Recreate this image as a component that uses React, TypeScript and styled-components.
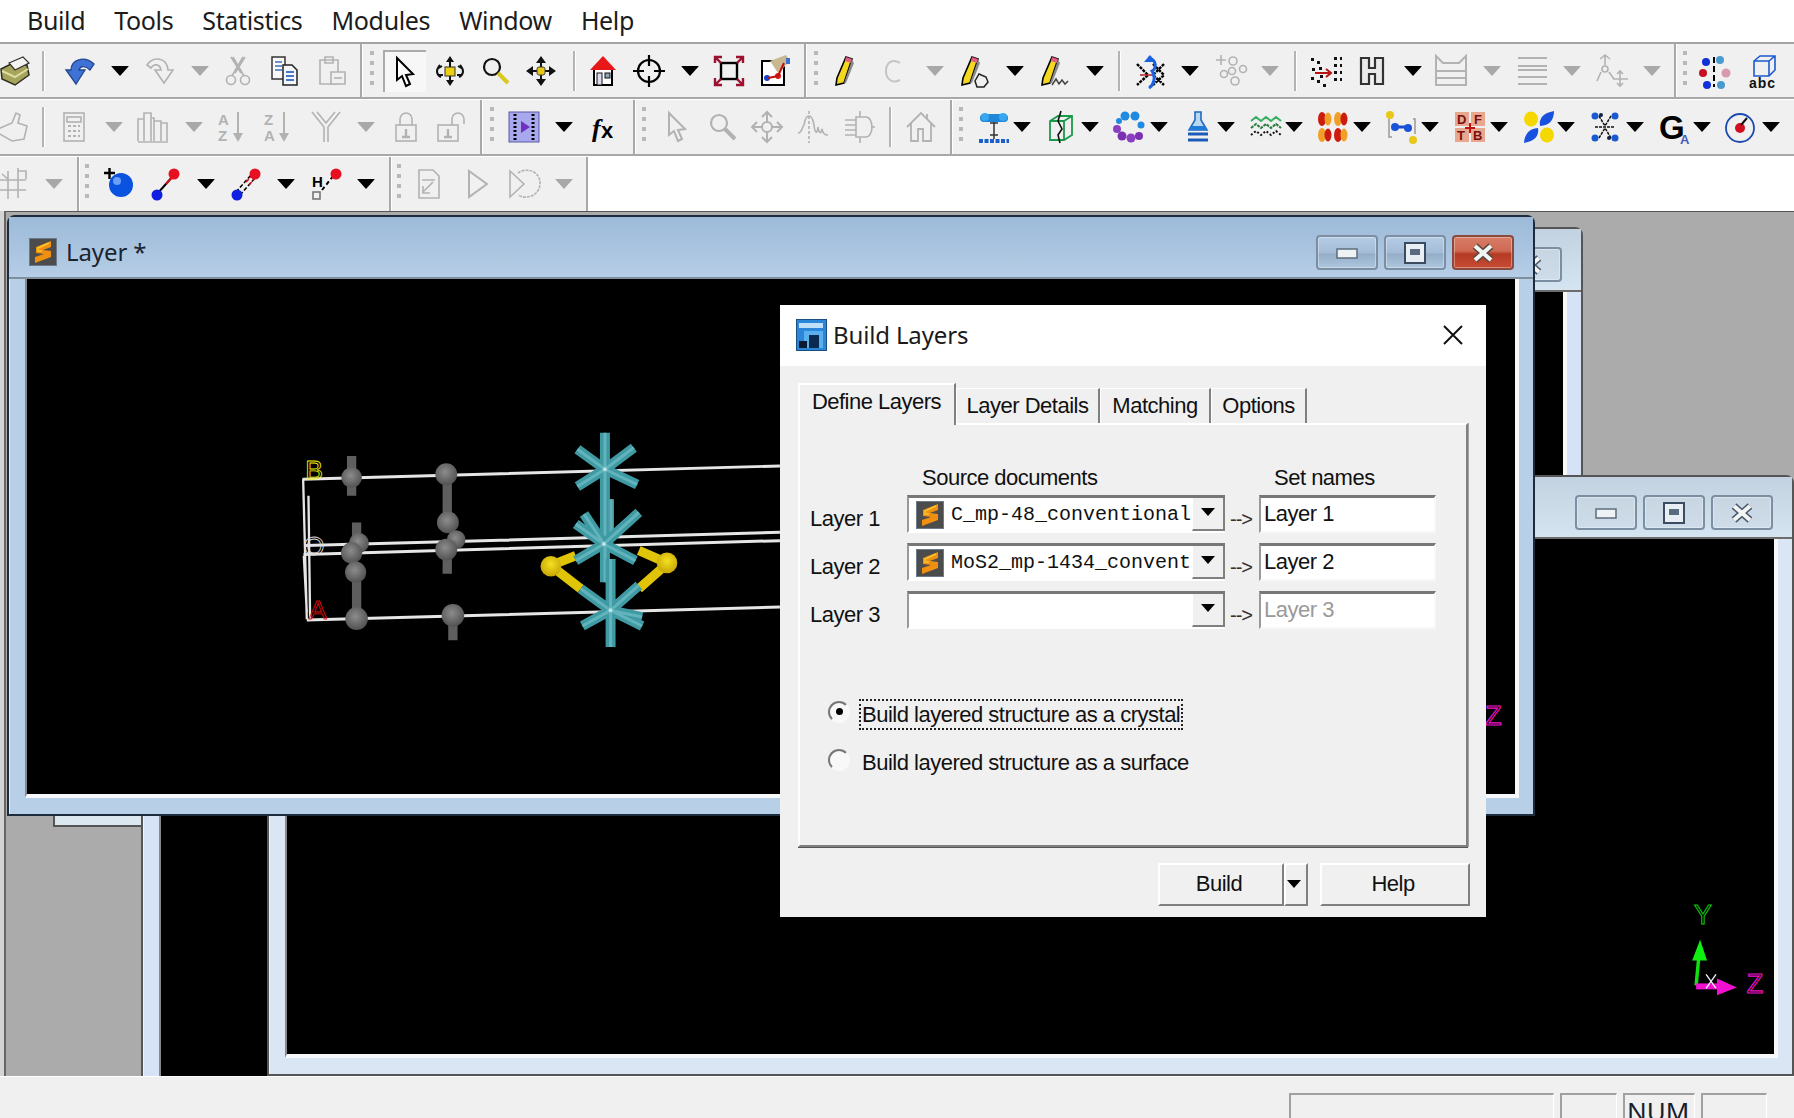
import React from 'react';
import styled, { createGlobalStyle } from 'styled-components';

const Global = createGlobalStyle`
  html, body { margin: 0; padding: 0; background: #fff; overflow: hidden; }
  * { box-sizing: border-box; }
`;

const UI = `"Liberation Sans", Arial, sans-serif`;
const NOTO = `"Noto Sans", "Open Sans", sans-serif`;
const g = '#b2b2b2';

const Page = styled.div`
  width: 1794px; height: 1118px; display: flex; flex-direction: column; overflow: hidden; background: #fff; position: relative;
`;
const MenuBar = styled.div`
  height: 42px; display: flex; align-items: center; gap: 29px; padding: 0 0 2px 27px;
  font: 25px ${NOTO}; color: #1c1c1c; background: #fff; letter-spacing: -0.35px;
`;
const Row = styled.div<{ $first?: boolean; $last?: boolean; $w?: number }>`
  display: flex; flex: none; background: #f0f0f0;
  height: ${p => (p.$first ? 57 : p.$last ? 54 : 56)}px;
  width: ${p => (p.$w ? `${p.$w}px` : '100%')};
  margin-top: ${p => (p.$first ? 0 : 1)}px;
  border-top: ${p => (p.$first ? '2px solid #a4a4a4' : 'none')};
  border-bottom: ${p => (p.$last ? 'none' : '2px solid #a8a8a8')};
`;
const Slot = styled.div<{ $w: number; $gap: number }>`
  width: ${p => p.$w}px; margin-left: ${p => p.$gap}px; flex: none; display: flex; align-items: center; justify-content: center; position: relative;
`;
const BandLine = styled.div`
  width: 2px; align-self: stretch; background: #a8a8a8; box-shadow: 1px 0 0 #fff;
`;
const SepLine = styled.div`
  width: 2px; height: 40px; background: #b4b4b4; box-shadow: 1px 0 0 #fff;
`;
const GripDots = styled.div`
  width: 4px; height: 40px; background: repeating-linear-gradient(to bottom, #b8b8b8 0 4px, transparent 4px 10px);
`;
const Caret = styled.div<{ $off?: boolean }>`
  width: 0; height: 0; border-left: 9px solid transparent; border-right: 9px solid transparent;
  border-top: 10px solid ${p => (p.$off ? '#a8a8a8' : '#000')};
  border-radius: 1px;
`;
const Pressed = styled.div`
  width: 43px; height: 42px; flex: none; display: flex; align-items: center; justify-content: center;
  background: #f7f7f7; border-top: 2px solid #ababab; border-left: 2px solid #ababab;
`;
const Svg = styled.svg`
  width: 32px; height: 32px; flex: none; display: block; overflow: visible;
`;

const D: React.SVGProps<SVGGElement> = { stroke: g, fill: 'none', strokeWidth: 1.6 };
const Ball = ({ x, y, r, c }: { x: number; y: number; r: number; c: string }) => <circle cx={x} cy={y} r={r} fill={c} />;
const Pencil = () => (
  <g>
    <path d="M14 2 L20 4 L12 28 L4 30 L5 23Z" fill="#f4d820" stroke="#000" strokeWidth="1.6" />
    <path d="M14 2 L20 4 L19 8 L13 6Z" fill="#e06080" />
    <path d="M20 5 L22 8 L14 28 L12 28Z" fill="#8a8a8a" />
  </g>
);
const Mag = ({ c, h }: { c: string; h: string }) => (
  <g>
    <circle cx="13" cy="12" r="8" fill="none" stroke={c} strokeWidth="2.2" />
    <path d="M19 18 L29 28" stroke={h} strokeWidth="4" />
  </g>
);
const Arrow4 = ({ c }: { c: string }) => (
  <g fill={c}>
    <path d="M16 1 L21 8 L11 8Z M16 31 L21 24 L11 24Z M1 16 L8 11 L8 21Z M31 16 L24 11 L24 21Z" />
    <path d="M15 6h2v20h-2z M6 15h20v2H6z" />
  </g>
);
const Txt = styled.text`
  font-family: ${UI};
  font-weight: 700;
`;

const icons: Record<string, React.ReactNode> = {
  box: (<g><path d="M2 14 L14 8 L28 10 L30 20 L16 30 L3 24Z" fill="#a6a45a" stroke="#2c2c20" strokeWidth="1.5" /><path d="M10 8 L24 2 L30 8 L16 15Z" fill="#f4f4f0" stroke="#333" strokeWidth="1.2" /><path d="M3 16 L16 22 L29 14" stroke="#dcdca0" fill="none" strokeWidth="2" /></g>),
  undo: (<path d="M7 15 C7 5 20 0 30 9 L26 15 C21 10 16 11 15 15 L21 15 L12 29 L2 15Z" fill="#3f72d4" stroke="#23468f" strokeWidth="1.3" />),
  redo: (<g {...D}><path d="M3 10 C9 1 23 2 24 15 L29 15 L20 28 L11 15 L17 15 C16 9 10 8 7 13Z" /></g>),
  cut: (<g {...D}><circle cx="9" cy="25" r="4.5" /><circle cx="23" cy="25" r="4.5" /><path d="M10 21 L21 2 M22 21 L11 2 M13 18 L23 2 M19 18 L9 2" /></g>),
  copy: (<g><path d="M3 2h13v22H3z" fill="#f8f8f8" stroke="#333" strokeWidth="1.5" /><path d="M6 7h7M6 11h7M6 15h7" stroke="#3f6fc0" strokeWidth="1.6" /><path d="M14 10h9l5 5v15H14z" fill="#f4f6fb" stroke="#222" strokeWidth="1.5" /><path d="M17 17h8M17 21h8M17 25h8" stroke="#4a78c8" strokeWidth="1.8" /></g>),
  paste: (<g {...D}><path d="M5 5h18v24H5z" /><path d="M10 2h8v6h-8z" /><path d="M16 17h14v12H16z" fill="#f0f0f0" /><path d="M19 23h8" /></g>),
  cursor: (<path d="M8 2 L8 24 L13 20 L17 30 L21 28 L17 19 L24 18Z" fill="#fff" stroke="#000" strokeWidth="2" />),
  rotate: (<g><path d="M16 1 L20 7 L12 7Z M16 31 L20 25 L12 25Z" fill="#111" /><path d="M15 3h2v26h-2z" fill="#111" /><path d="M6 10 C1 16 3 20 7 22 M26 10 C31 16 29 20 25 22 M3 14 L8 11 M29 14 L24 11 M4 20 L9 20 M28 20 L23 20" stroke="#111" fill="none" strokeWidth="2" /><rect x="11" y="12" width="10" height="9" fill="#eccf10" stroke="#333" /></g>),
  mag: <Mag c="#111" h="#d8c820" />,
  move: (<g><Arrow4 c="#111" /><rect x="12" y="12" width="8" height="8" rx="2" fill="#e8c810" stroke="#444" /></g>),
  home: (<g><path d="M7 14h18v16H7z" fill="#fff" stroke="#000" strokeWidth="2" /><path d="M16 1 L29 15 L3 15Z" fill="#e81818" /><rect x="10" y="18" width="5" height="12" fill="#dde" stroke="#111" /><rect x="18" y="18" width="5" height="5" fill="#8ab" stroke="#111" /></g>),
  target: (<g fill="none" stroke="#000" strokeWidth="2.2"><circle cx="16" cy="16" r="11" /><path d="M16 0v11M16 21v11M0 16h11M21 16h11" /></g>),
  fit: (<g fill="none"><rect x="8" y="8" width="16" height="16" stroke="#000" strokeWidth="2.4" /><path d="M2 8V2h7M23 2h7v6M30 23v7h-7M9 30H2v-7M3 3l5 5M29 3l-5 5M3 29l5-5M29 29l-5-5" stroke="#9c1030" strokeWidth="2.4" /></g>),
  style: (<g><rect x="2" y="6" width="22" height="24" fill="#fff" stroke="#000" strokeWidth="2" /><path d="M10 6 L26 0 L30 6 L18 18Z" fill="#c8b890" /><Ball x={7} y={23} r={3} c="#1840d0" /><Ball x={18} y={21} r={3} c="#e01818" /><path d="M8 23 L18 21 M18 21 L24 8" stroke="#c01010" strokeWidth="2" /><rect x="26" y="3" width="4" height="6" fill="#3f70d0" /></g>),
  pencil: <Pencil />,
  c: (<path d="M22 8 C14 3 8 8 8 16 C8 24 14 29 22 25" fill="none" stroke="#c4c4c4" strokeWidth="2" />),
  penHex: (<g><Pencil /><path d="M21 19 L28 22 L30 27 L26 32 L19 32 L17 26Z" fill="none" stroke="#222" strokeWidth="1.5" /></g>),
  penWave: (<g><Pencil /><path d="M14 30 L18 24 L21 29 L24 25 L27 29 L30 26" fill="none" stroke="#444" strokeWidth="1.5" /></g>),
  sym: (<g fill="none"><path d="M3 9 L14 20 L3 30 M30 9 L19 20 L30 30 M19 9 L30 20 L19 30" stroke="#000" strokeWidth="2.4" strokeDasharray="3 1" /><path d="M6 20h14" stroke="#b02020" strokeWidth="1.5" /><path d="M14 3 C24 5 22 14 18 16 C22 22 20 30 15 33" stroke="#1a62e0" strokeWidth="3" /><path d="M16 0 L22 7 L10 7Z" fill="#1a62e0" /></g>),
  gAtoms: (<g {...D}><path d="M2 5h10M7 0v10" /><circle cx="19" cy="6" r="4" /><circle cx="10" cy="19" r="3.5" /><circle cx="18" cy="16" r="3.5" /><circle cx="29" cy="14" r="3.5" /><circle cx="21" cy="26" r="4" /></g>),
  dotsArrow: (<g><path d="M1 3h3v3H1z M7 6h3v3H7z M2 13h3v3H2z M9 12h3v3H9z M1 22h3v3H1z M7 25h3v3H7z M10 20h3v3h-3z M13 29h3v3h-3z M24 2h3v3h-3z M30 2h2v3h-2z M24 9h3v3h-3z M30 9h2v3h-2z M24 16h3v3h-3z M30 16h2v3h-2z M24 23h3v3h-3z M30 23h2v3h-2z" fill="#111" /><path d="M5 18h16M16 14 L21 18 L16 22" fill="none" stroke="#b81414" strokeWidth="2" /></g>),
  hBlock: (<path d="M5 3h8v10h6V3h8v26h-8V19h-6v10H5z" fill="#eaeaea" stroke="#333" strokeWidth="2.2" />),
  crown: (<g {...D} strokeWidth="2"><path d="M1 1 V16 H31 V1 L24 8 H8Z" /><path d="M1 16v14h30V16M1 23h30" /></g>),
  lines: (<g {...D} strokeWidth="2.2"><path d="M2 3h29M2 11h29M2 15h29M2 22h29M2 29h29" /></g>),
  gMoves: (<g {...D}><path d="M9 0v10M4 4l5-4 5 4" /><circle cx="9" cy="14" r="3" /><path d="M5 17 L1 26M13 17 L18 24" /><g><path d="M24 16v15M17 24h15" /><path d="M21 19l3-3 3 3M21 28l3 3 3-3" /></g></g>),
  split: (<g><Ball x={6} y={7} r={4} c="#1030d8" /><Ball x={20} y={5} r={4} c="#4a9ad0" /><Ball x={3} y={18} r={4} c="#c80f20" /><Ball x={26} y={18} r={4.5} c="#d89ab0" /><Ball x={7} y={30} r={4} c="#1030d8" /><Ball x={21} y={30} r={4} c="#4a9ad0" /><path d="M14 2v30" stroke="#000" strokeWidth="2" strokeDasharray="6 3" /></g>),
  cubeAbc: (<g><path d="M8 6 L14 1 H29 V15 L23 21 H8Z M8 6 H23 V21 M23 6 L29 1" fill="none" stroke="#1c5ad0" strokeWidth="1.6" /><Txt x="3" y="33" fontSize="14" fill="#111" letterSpacing="1">abc</Txt></g>),

  hand: (<g {...D}><path d="M0 18 L14 12 L18 2 L22 4 L20 12 L29 15 L26 28 L14 30 L0 22" /></g>),
  calc: (<g {...D}><rect x="7" y="2" width="20" height="28" /><rect x="10" y="6" width="14" height="5" /><path d="M11 15h3M16 15h3M21 15h2M11 20h3M16 20h3M21 20h2M11 25h3M16 25h3M21 25h2" strokeWidth="2" /></g>),
  books: (<g {...D}><path d="M1 30V8h6v22M7 30V2h7v28M14 30V7h3v23M17 30V10h7v20M24 30V12h6v18M1 31h30" /></g>),
  az: (<g><Txt x="1" y="14" fontSize="15" fill={g}>A</Txt><Txt x="1" y="30" fontSize="15" fill={g}>Z</Txt><path d="M21 1v24" stroke={g} strokeWidth="2" /><path d="M16 22h10l-5 9z" fill={g} /></g>),
  za: (<g><Txt x="1" y="14" fontSize="15" fill={g}>Z</Txt><Txt x="1" y="30" fontSize="15" fill={g}>A</Txt><path d="M21 1v24" stroke={g} strokeWidth="2" /><path d="M16 22h10l-5 9z" fill={g} /></g>),
  fork: (<g {...D}><path d="M2 1 L14 16 V31 M30 1 L18 16 V31 M7 1 L16 12 L25 1" /></g>),
  lock: (<g {...D}><rect x="6" y="14" width="20" height="16" /><path d="M10 14V8a6 6 0 0 1 12 0v6" /><path d="M16 18v8M12 26h8" strokeWidth="2.4" /></g>),
  unlock: (<g {...D}><rect x="2" y="14" width="20" height="16" /><path d="M16 14V8a6 6 0 0 1 12 0v5" /><path d="M12 18v8M8 26h8" strokeWidth="2.4" /></g>),
  purple: (<g><rect x="1" y="1" width="30" height="30" fill="#a8a8ee" stroke="#5858a0" /><path d="M7 3v26M25 3v26" stroke="#000" strokeWidth="3" strokeDasharray="2 2" /><path d="M13 10 L22 16 L13 22Z" fill="#7030c0" /></g>),
  fx: (<g><Txt x="3" y="26" fontSize="26" fill="#000" fontStyle="italic" style={{ fontFamily: '"Liberation Serif", serif' }}>f</Txt><Txt x="12" y="27" fontSize="22" fill="#000">x</Txt></g>),
  dCursor: (<g {...D}><path d="M8 2 L8 24 L13 20 L17 30 L21 28 L17 19 L24 18Z" strokeWidth="2" /></g>),
  dMag: <Mag c={g} h={g} />,
  dMove: (<g {...D} strokeWidth="2"><circle cx="16" cy="16" r="5" /><path d="M16 1v10M16 21v10M1 16h10M21 16h10M11 6l5-5 5 5M11 26l5 5 5-5M6 11l-5 5 5 5M26 11l5 5-5 5" /></g>),
  peaks: (<g {...D}><path d="M1 22 C5 22 5 16 7 14 C9 2 15 2 17 14 C18 22 20 24 21 16 C22 22 24 24 25 18 C26 24 29 24 31 24" /><path d="M12 0v32" strokeDasharray="3 2" /></g>),
  gear: (<g {...D}><path d="M13 6h10a6 10 0 0 1 0 20H13z" /><path d="M2 9h11M2 14h11M2 19h11M2 24h11M28 16h4M17 0v6M17 26v6" /></g>),
  dHouse: (<g {...D} strokeWidth="1.8"><path d="M2 16 L16 2 L30 16 M6 12v18h7V18h5v12h8V12" /><path d="M22 3v5" /></g>),
  dumbbell: (<g><path d="M16 8v20M12 12h8M12 24h8" stroke="#333" strokeWidth="1.5" /><rect x="2" y="3" width="28" height="8" rx="4" fill="#1f86d8" /><Ball x={7} y={6} r={4} c="#37a8f0" /><Ball x={25} y={6} r={4} c="#37a8f0" /><path d="M1 30h30" stroke="#1a60c8" strokeWidth="4" strokeDasharray="4 1.5" /></g>),
  gCube: (<g fill="none"><path d="M5 10 L13 5 H27 V24 L19 29 H5Z M5 10 H19 V29 M19 10 L27 5" stroke="#1a9a4a" strokeWidth="1.8" /><path d="M16 0 L13 10 L17 18 L13 24 L15 32" stroke="#111" strokeWidth="1.6" /></g>),
  ring: (<g><Ball x={12} y={5} r={4.5} c="#1f8ae0" /><Ball x={22} y={5} r={4.5} c="#1f8ae0" /><Ball x={6} y={10} r={3} c="#1f8ae0" /><Ball x={28} y={14} r={3.5} c="#1f8ae0" /><Ball x={4} y={18} r={4} c="#8a3fc0" /><Ball x={9} y={25} r={4.5} c="#7a30b0" /><Ball x={18} y={27} r={4.5} c="#8a3fc0" /><Ball x={26} y={25} r={4} c="#7a30b0" /></g>),
  flask: (<g><path d="M13 1h6v8 l6 10H7 l6-10z" fill="#b8d8f0" stroke="#1e6ac0" strokeWidth="1.6" /><path d="M9 15h14l2 4H7z" fill="#1f7ad8" /><path d="M6 23h20M6 29h20" stroke="#1a5ab8" strokeWidth="3" /></g>),
  wave: (<g fill="none"><path d="M1 10 l5-4 5 4 5-4 5 4 5-4 5 4" stroke="#36b060" strokeWidth="2" /><path d="M1 17 l5-4 5 4 5-4 5 4 5-4 5 4" stroke="#2a7a40" strokeWidth="2" strokeDasharray="3 1" /><path d="M1 24 l5-4 5 4 5-4 5 4 5-4 5 4" stroke="#111" strokeWidth="2" strokeDasharray="2 2" /></g>),
  orbRed: (<g><ellipse cx="5" cy="8" rx="4" ry="7" fill="#cc1c10" /><ellipse cx="11" cy="8" rx="3.5" ry="6.5" fill="#f0a028" /><ellipse cx="21" cy="8" rx="4" ry="7" fill="#f0a028" /><ellipse cx="27" cy="8" rx="3.5" ry="6.5" fill="#cc1c10" /><ellipse cx="5" cy="24" rx="4" ry="7" fill="#f0a028" /><ellipse cx="11" cy="24" rx="3.5" ry="6.5" fill="#cc1c10" /><ellipse cx="21" cy="24" rx="4" ry="7" fill="#cc1c10" /><ellipse cx="27" cy="24" rx="3.5" ry="6.5" fill="#f0a028" /></g>),
  bracket: (<g><Ball x={5} y={4} r={4} c="#e8c818" /><Ball x={28} y={29} r={4} c="#e8c818" /><path d="M4 8v18h3M28 8h2v15" fill="none" stroke="#999" strokeWidth="1.5" /><path d="M9 16h14" stroke="#1a4ad0" strokeWidth="3" /><Ball x={10} y={16} r={4} c="#1a52d8" /><Ball x={23} y={17} r={4} c="#1a52d8" /></g>),
  dftb: (<g><rect x="1" y="1" width="14" height="14" fill="#e8a890" /><rect x="17" y="1" width="14" height="14" fill="#e8a890" /><rect x="1" y="17" width="14" height="14" fill="#e8a890" /><rect x="17" y="17" width="14" height="14" fill="#e8a890" /><Txt x="3" y="13" fontSize="13" fill="#7a1010">D</Txt><Txt x="20" y="13" fontSize="13" fill="#7a1010">F</Txt><Txt x="3" y="29" fontSize="13" fill="#7a1010">T</Txt><Txt x="19" y="29" fontSize="13" fill="#7a1010">B</Txt><path d="M16 12v10M11 17h10" stroke="#c01010" strokeWidth="2" /></g>),
  orbBlue: (<g><ellipse cx="8" cy="8" rx="7" ry="7.5" fill="#f4d800" /><path d="M31 0 Q31 14 17 15 Q15 3 31 0Z" fill="#1850e0" /><path d="M1 32 Q2 18 15 17 Q17 29 1 32Z" fill="#1850e0" /><ellipse cx="24" cy="24" rx="7" ry="7.5" fill="#f4d800" /></g>),
  atoms4: (<g><path d="M10 5 L16 15 M22 5 L16 15 M6 16 L26 16 M10 27 L16 17 M22 27 L16 17" stroke="#111" strokeWidth="1.5" strokeDasharray="3 1" /><Ball x={6} y={5} r={3.5} c="#1a5ad0" /><Ball x={26} y={5} r={3.5} c="#1a5ad0" /><Ball x={12} y={4} r={2} c="#124" /><Ball x={6} y={27} r={3.5} c="#1a5ad0" /><Ball x={26} y={27} r={3.5} c="#1a5ad0" /><Ball x={20} y={27} r={2} c="#124" /></g>),
  gauss: (<g><Txt x="1" y="28" fontSize="33" fill="#000" style={{ fontWeight: 900 }}>G</Txt><Txt x="22" y="33" fontSize="13" fill="#4a5ac0">A</Txt></g>),
  target2: (<g><circle cx="15" cy="17" r="14" fill="none" stroke="#1c4ab0" strokeWidth="1.8" /><Ball x={15} y={17} r={5} c="#d01020" /><path d="M16 14 L22 7" stroke="#111" strokeWidth="2" /></g>),

  gGrid: (<g {...D}><path d="M0 12h28M0 22h28M10 3v28M20 0v30M4 6l7 6M20 3h8v8" /></g>),
  plusAtom: (<g><path d="M2 5h11M7.5 0v11" stroke="#000" strokeWidth="2.4" /><Ball x={19} y={17} r={12} c="#0a52e0" /><circle cx="15" cy="13" r="4" fill="#6aa0f8" /></g>),
  bond: (<g><path d="M7 26 L24 7" stroke="#000" strokeWidth="2" /><path d="M16 16 L24 7" stroke="#d01020" strokeWidth="2" /><Ball x={24} y={6} r={5.5} c="#e81020" /><Ball x={7} y={27} r={5.5} c="#1020e0" /></g>),
  dbond: (<g><path d="M6 24 L22 6 M10 27 L26 9" stroke="#000" strokeWidth="1.6" strokeDasharray="4 2" /><path d="M16 14 L24 6 M19 17 L26 9" stroke="#d01020" strokeWidth="1.6" strokeDasharray="4 2" /><Ball x={25} y={6} r={5.5} c="#e81020" /><Ball x={7} y={27} r={5.5} c="#1020e0" /></g>),
  hbond: (<g><Txt x="2" y="19" fontSize="15" fill="#000">H</Txt><rect x="3" y="24" width="7" height="7" fill="none" stroke="#777" strokeWidth="1.6" /><path d="M12 22 L24 7" stroke="#000" strokeWidth="2" strokeDasharray="4 3" /><Ball x={26} y={6} r={5.5} c="#e81020" /></g>),
  dDoc: (<g {...D}><path d="M6 2h14l6 6v22H6z" /><path d="M9 12h13M10 24 L20 14 M10 18v7h7" /></g>),
  play: (<g {...D} strokeWidth="2"><path d="M8 3 L26 16 L8 29Z" /></g>),
  loop: (<g {...D}><path d="M2 3 L16 16 L2 29Z" /><path d="M10 5 C18 -1 32 3 32 15 C32 28 18 32 10 27" strokeDasharray="3 1" /></g>),
};

type Item = [number, string];
const Ic = ({ n }: { n: string }) => <Svg viewBox="0 0 32 32">{icons[n]}</Svg>;

const slotWidth = (n: string) => {
  if (n === 'band' || n === 'sep') return 2;
  if (n === 'grip') return 4;
  if (n === 'dd' || n === 'off') return 18;
  if (n === 'cursor') return 43;
  return 32;
};

const renderItem = (n: string) => {
  if (n === 'band') return <BandLine />;
  if (n === 'sep') return <SepLine />;
  if (n === 'grip') return <GripDots />;
  if (n === 'dd') return <Caret />;
  if (n === 'off') return <Caret $off />;
  if (n === 'cursor') return <Pressed><Ic n="cursor" /></Pressed>;
  return <Ic n={n} />;
};

const ToolRow = ({ items, first, last, width }: { items: Item[]; first?: boolean; last?: boolean; width?: number }) => {
  let cursor = 0;
  return (
    <Row $first={first} $last={last} $w={width}>
      {items.map(([c, n], i) => {
        const w = slotWidth(n);
        const gap = c - w / 2 - cursor;
        cursor = c + w / 2;
        return <Slot key={i} $w={w} $gap={gap}>{renderItem(n)}</Slot>;
      })}
    </Row>
  );
};

const row1: Item[] = [[15,'box'],[43,'sep'],[80,'undo'],[120,'dd'],[160,'redo'],[200,'off'],[238,'cut'],[285,'copy'],[331,'paste'],[361,'band'],[372,'grip'],[404,'cursor'],[450,'rotate'],[495,'mag'],[541,'move'],[574,'sep'],[603,'home'],[649,'target'],[690,'dd'],[729,'fit'],[776,'style'],[805,'band'],[816,'grip'],[848,'pencil'],[894,'c'],[935,'off'],[974,'penHex'],[1015,'dd'],[1054,'penWave'],[1095,'dd'],[1119,'sep'],[1150,'sym'],[1190,'dd'],[1230,'gAtoms'],[1270,'off'],[1295,'sep'],[1326,'dotsArrow'],[1372,'hBlock'],[1413,'dd'],[1451,'crown'],[1492,'off'],[1532,'lines'],[1572,'off'],[1612,'gMoves'],[1652,'off'],[1675,'band'],[1685,'grip'],[1716,'split'],[1762,'cubeAbc']];
const row2: Item[] = [[14,'hand'],[43,'sep'],[73,'calc'],[114,'off'],[153,'books'],[194,'off'],[233,'az'],[279,'za'],[326,'fork'],[366,'off'],[406,'lock'],[452,'unlock'],[481,'band'],[492,'grip'],[524,'purple'],[564,'dd'],[605,'fx'],[634,'band'],[644,'grip'],[677,'dCursor'],[722,'dMag'],[767,'dMove'],[813,'peaks'],[859,'gear'],[890,'sep'],[921,'dHouse'],[951,'band'],[961,'grip'],[994,'dumbbell'],[1022,'dd'],[1061,'gCube'],[1090,'dd'],[1129,'ring'],[1159,'dd'],[1198,'flask'],[1226,'dd'],[1266,'wave'],[1294,'dd'],[1333,'orbRed'],[1362,'dd'],[1401,'bracket'],[1430,'dd'],[1470,'dftb'],[1499,'dd'],[1539,'orbBlue'],[1566,'dd'],[1605,'atoms4'],[1635,'dd'],[1674,'gauss'],[1702,'dd'],[1741,'target2'],[1771,'dd']];
const row3: Item[] = [[14,'gGrid'],[54,'off'],[78,'band'],[87,'grip'],[118,'plusAtom'],[166,'bond'],[206,'dd'],[246,'dbond'],[286,'dd'],[326,'hbond'],[366,'dd'],[390,'band'],[399,'grip'],[429,'dDoc'],[477,'play'],[524,'loop'],[564,'off'],[587,'band']];

const Desk = styled.div`
  position: relative; flex: none; height: 865px; background: #ababab; overflow: hidden;
  box-shadow: inset 4px 0 0 #d4d4d4, inset 6px 0 0 #666, inset 0 1px 0 #555;
`;
const MdiWindow = styled.div<{ $x: number; $y: number; $w: number; $h: number; $active?: boolean; $tone: string }>`
  position: absolute; left: ${p => p.$x}px; top: ${p => p.$y}px; width: ${p => p.$w}px; height: ${p => p.$h}px;
  display: flex; flex-direction: column;
  padding: 0 14px 16px 16px;
  background: ${p => p.$tone};
  border: 2px solid ${p => (p.$active ? '#1c2c3c' : '#555')};
  border-radius: 8px 8px 0 0;
  box-shadow: inset 1px 1px 0 rgba(255,255,255,.6);
`;
const TitleBar = styled.div<{ $active?: boolean; $h: number }>`
  flex: none; height: ${p => p.$h}px; display: flex; align-items: flex-start; gap: 9px; padding: 21px 19px 0 20px; margin: 0 -14px 0 -16px;
  background: ${p => (p.$active ? 'linear-gradient(#9cbad8, #b6cde6)' : 'linear-gradient(#c2d2e0, #d4e4f0)')};
  border-bottom: 2px solid ${p => (p.$active ? '#7f8f9c' : '#6c6c6c')};
`;
const TitleText = styled.div`
  font: 24px ${NOTO}; color: #1a2430; flex: 1; line-height: 32px; letter-spacing: -0.1px; margin-top: -2px;
`;
const CapButtons = styled.div`
  display: flex; gap: 6px; margin-top: -3px;
`;
const CapButton = styled.div<{ $close?: boolean; $active?: boolean }>`
  width: 62px; height: 35px; display: flex; align-items: center; justify-content: center;
  border: 2px solid ${p => (p.$close && p.$active ? '#8c4a3c' : '#7b8ea2')};
  border-radius: 4px;
  background: ${p => (p.$close && p.$active
    ? 'linear-gradient(#d87c66 0%, #cf6a54 45%, #b53a24 55%, #c84c34 100%)'
    : p.$active ? 'linear-gradient(#b4cce4, #a4bcd6 50%, #94aec8 55%, #aec6de)' : 'linear-gradient(#c8d6e2, #cddce8)')};
  box-shadow: inset 0 0 0 1px rgba(255,255,255,.35);
`;
const Viewport = styled.div`
  flex: 1; position: relative; background: #000; overflow: hidden;
`;
const ViewportWrap = styled.div`
  flex: 1; display: flex; min-height: 0;
  border-left: 2px solid #888; border-right: 4px solid #f6f8fa; border-bottom: 4px solid #f6f8fa;
`;
const Scene = styled.svg`
  position: absolute; left: 0; top: 0; width: 100%; height: 100%; display: block;
`;
const LabelText = styled.text<{ $ink: string }>`
  font-family: ${UI}; font-size: 27px; fill: none; stroke-width: 1.1; stroke: ${p => p.$ink};
`;
const Stub = styled.div`
  position: absolute; left: 53px; top: 500px; width: 90px; height: 116px; background: #dce8f0;
  border: 2px solid #555; border-top: none; border-right: none;
`;

const SIcon = styled.div<{ $size: number }>`
  width: ${p => p.$size}px; height: ${p => p.$size}px; flex: none; background: #4c4c4c; display: flex; align-items: center; justify-content: center;
  border: 1px solid #6a7a8a;
`;
const SLogo = ({ size }: { size: number }) => (
  <SIcon $size={size}>
    <svg width={size - 6} height={size - 4} viewBox="0 0 22 24">
      <path d="M19 1 L4 7 L4 13 L12 14 L3 17 L3 23 L19 17 L19 11 L11 10 L19 7Z" fill="#f09010" />
      <path d="M17 3 L6 8 L6 11 L10 11" fill="none" stroke="#f8c830" strokeWidth="1.4" />
    </svg>
  </SIcon>
);

const Glyph = ({ k, on }: { k: 'min' | 'max' | 'close'; on?: boolean }) => {
  if (k === 'min') return (<svg width="22" height="12" viewBox="0 0 22 12"><rect x="1" y="2" width="20" height="9" fill="#eef2f4" stroke="#5c6c7c" strokeWidth="1.5" /></svg>);
  if (k === 'max') return (<svg width="22" height="22" viewBox="0 0 22 22"><rect x="1" y="1" width="20" height="20" fill="#e8eef4" stroke="#3c4c60" strokeWidth="2" /><rect x="6" y="7" width="10" height="6" fill="#5c6c80" /></svg>);
  return (<svg width="24" height="20" viewBox="0 0 24 20"><path d="M4 3 L20 17 M20 3 L4 17" stroke={on ? '#5a4a40' : '#4c5c70'} strokeWidth="7" /><path d="M4 3 L20 17 M20 3 L4 17" stroke="#f4f6f4" strokeWidth="4" /></svg>);
};

const Caption = ({ active }: { active?: boolean }) => (
  <CapButtons>
    <CapButton $active={active}><Glyph k="min" /></CapButton>
    <CapButton $active={active}><Glyph k="max" /></CapButton>
    <CapButton $close $active={active}><Glyph k="close" on={active} /></CapButton>
  </CapButtons>
);

/* dialog */
const Dialog = styled.div`
  position: absolute; left: 780px; top: 94px; width: 706px; height: 612px; background: #f0f0f0;
  display: flex; flex-direction: column; font: 22px ${UI}; letter-spacing: -0.5px; color: #111;
`;
const DlgTitle = styled.div`
  height: 61px; flex: none; background: #fff; display: flex; align-items: center; gap: 6px; padding: 0 22px 2px 16px;
`;
const DlgIcon = styled.div`
  width: 31px; height: 32px; flex: none; display: flex; align-items: center; justify-content: center;
`;
const DlgName = styled.div`
  font: 24px ${NOTO}; color: #1a1a1a; flex: 1; letter-spacing: -0.15px;
`;
const DlgBody = styled.div`
  flex: 1; padding: 17px 18px 0;
`;
const Tabs = styled.div`
  display: flex; height: 40px; align-items: flex-end; position: relative; z-index: 1;
`;
const Tab = styled.div<{ $on?: boolean; $w: number }>`
  width: ${p => p.$w}px; height: ${p => (p.$on ? 42 : 35)}px; margin-bottom: ${p => (p.$on ? -2 : 0)}px;
  display: flex; align-items: center; justify-content: center;
  padding-bottom: ${p => (p.$on ? 6 : 0)}px;
  background: #f0f0f0; border-top: 1px solid #fff; border-left: 1px solid #fff;
  border-right: 2px solid #808080;
  box-shadow: ${p => (p.$on ? 'inset 1px 1px 0 #fff' : 'none')};
`;
const Pane = styled.div`
  width: 670px; height: 424px; border: 2px solid; border-color: #fff #808080 #808080 #fff;
  box-shadow: 0 1px 0 #555, 1px 0 0 #a0a0a0;
  padding: 46px 0 0 10px;
`;
const LayerGrid = styled.div`
  display: grid; grid-template-columns: 97px 318px 34px 177px; grid-template-rows: 14px 38px 38px 38px; row-gap: 10px; align-items: center;
`;
const HeadCell = styled.div<{ $pad: number; $col: number }>`
  grid-column: ${p => p.$col}; padding-left: ${p => p.$pad}px; white-space: nowrap; line-height: 14px;
`;
const RowLabel = styled.div`
  padding-top: 10px;
`;
const Combo = styled.div`
  height: 38px; display: flex; align-items: stretch; background: #fff;
  border-top: 3px solid #777; border-left: 2px solid #999; border-bottom: 2px solid #fff;
`;
const ComboValue = styled.div`
  flex: 1; min-width: 0; display: flex; align-items: center; gap: 7px; padding-left: 7px; overflow: hidden;
  font: 20px "Liberation Mono", monospace; letter-spacing: 0; white-space: nowrap;
`;
const ComboBtn = styled.div`
  width: 33px; flex: none; display: flex; align-items: center; justify-content: center; background: #f0f0f0;
  border-bottom: 2px solid #808080; border-right: 2px solid #808080; border-left: 1px solid #fff; padding-bottom: 4px;
`;
const SmallCaret = styled.div`
  width: 0; height: 0; border-left: 7px solid transparent; border-right: 7px solid transparent; border-top: 8px solid #000;
`;
const Arrow = styled.div`
  font-size: 20px; padding: 10px 0 0 5px; letter-spacing: -1px; color: #333;
`;
const NameInput = styled.div<{ $off?: boolean }>`
  height: 38px; background: #fff; padding: 0 0 2px 3px; display: flex; align-items: center;
  border-top: 3px solid #777; border-left: 2px solid #999; border-bottom: 2px solid #f8f8f8; border-right: 2px solid #f8f8f8;
  color: ${p => (p.$off ? '#9a9a9a' : '#111')};
`;
const Radios = styled.div`
  display: flex; flex-direction: column; gap: 17px; margin-top: 70px; padding-left: 18px;
`;
const RadioRow = styled.div`
  display: flex; align-items: center; gap: 11px; height: 31px;
`;
const RadioMark = styled.div<{ $on?: boolean }>`
  width: 22px; height: 22px; border-radius: 50%; background: #f8f8f8; flex: none; margin-top: -6px;
  border: 2px solid; border-color: #777 #f8f8f8 #f8f8f8 #777;
  display: flex; align-items: center; justify-content: center;
  &::after { content: ''; width: 7px; height: 7px; border-radius: 50%; background: ${p => (p.$on ? '#000' : 'transparent')}; }
`;
const RadioLabel = styled.div<{ $focus?: boolean }>`
  padding: 0 1px; white-space: nowrap; line-height: 27px;
  outline: ${p => (p.$focus ? '2px dotted #222' : 'none')};
`;
const BtnRow = styled.div`
  display: flex; justify-content: flex-end; margin: 16px -2px 0 0;
`;
const PushBtn = styled.div<{ $w: number; $ml?: number }>`
  width: ${p => p.$w}px; height: 43px; margin-left: ${p => p.$ml ?? 0}px; display: flex; align-items: center; justify-content: center;
  background: #f0f0f0; border: 2px solid; border-color: #fff #808080 #808080 #fff; padding: 0 4px 2px 0;
`;

const Status = styled.div`
  height: 42px; flex: none; background: #f0f0f0; display: flex; gap: 6px; padding: 16px 0 0 1289px; border-top: 1px solid #fff;
`;
const StatusCell = styled.div<{ $w: number }>`
  width: ${p => p.$w}px; height: 40px; border-top: 2px solid #a0a0a0; border-left: 2px solid #a0a0a0; border-right: 1px solid #fff;
  font: 26px ${NOTO}; color: #16202c; padding: 0 0 0 2px; overflow: hidden; line-height: 32px;
`;

const Sphere = ({ x, y, r = 31 }: { x: number; y: number; r?: number }) => <circle cx={x} cy={y} r={r} fill="url(#carbon)" />;
const Stick = ({ d, c = '#3f9aa4', w = 30 }: { d: string; c?: string; w?: number }) => (
  <g>
    <path d={d} stroke={c} strokeWidth={w} fill="none" />
    <path d={d} stroke="#62b4bc" strokeWidth={w * 0.3} fill="none" />
  </g>
);

const Molecule = () => (
  <g transform="translate(270 410) scale(.3333)">
    <g stroke="#e6e6e6" strokeWidth="9" fill="none">
      <path d="M92 210 L1530 170 M100 410 L1530 370 M95 437 L1530 395 M105 634 L1530 595" />
      <path d="M94 210 L105 632 M110 260 L115 632 M96 440 L105 610" strokeWidth="7" />
    </g>
    <text x="100" y="208" fontSize="80" fill="none" stroke="#f0f000" strokeWidth="2.6" fontFamily="Liberation Sans">B</text>
    <text x="96" y="438" fontSize="80" fill="none" stroke="#d8d8d8" strokeWidth="2.6" fontFamily="Liberation Sans">O</text>
    <text x="112" y="630" fontSize="80" fill="none" stroke="#e01010" strokeWidth="2.6" fontFamily="Liberation Sans">A</text>
    <g stroke="#5e5e5e" strokeWidth="28">
      <path d="M240 140V260 M528 195V340 M528 420V495 M255 340V400 M255 490V630 M545 620V695" />
    </g>
    <Sphere x={240} y={205} /><Sphere x={525} y={195} r={33} /><Sphere x={530} y={340} r={33} /><Sphere x={555} y={392} r={28} />
    <Sphere x={525} y={422} r={33} /><Sphere x={262} y={402} r={30} /><Sphere x={240} y={432} r={32} /><Sphere x={252} y={490} r={32} />
    <Sphere x={255} y={630} r={34} /><Sphere x={545} y={620} r={34} />
    <g fill="none" strokeWidth="28" stroke="#e0c408">
      <path d="M840 470L930 540 M1190 465L1105 540 M840 470L915 440 M1190 462L1105 425" />
    </g>
    <Stick d="M1003 70V400 M1003 180L920 120 M1003 180L1090 115 M1003 180L920 232 M1003 180L1100 226" />
    <Stick d="M1022 270V400" c="#55a0a8" w={16} />
    <Stick d="M1000 405L940 315 M1000 405L1105 310 M1000 405L915 345 M1000 405L915 455 M1000 405L1095 455 M1003 405V520" />
    <Stick d="M1020 450V715 M1020 605L935 652 M1020 605L1115 652 M1020 605L1115 625 M1020 605L930 540 M1020 605L1105 530" />
    <circle cx="840" cy="472" r="31" fill="url(#sulfur)" />
    <circle cx="1190" cy="462" r="31" fill="url(#sulfur)" />
    <g fill="#bfe4e8"><circle cx="1003" cy="180" r="6" /><circle cx="1000" cy="405" r="6" /><circle cx="1020" cy="605" r="6" /></g>
    <defs>
      <radialGradient id="carbon" cx=".45" cy=".4" r=".7"><stop offset="0" stopColor="#8c8c8c" /><stop offset="1" stopColor="#484848" /></radialGradient>
      <radialGradient id="sulfur" cx=".5" cy=".4" r=".7"><stop offset="0" stopColor="#f4e020" /><stop offset="1" stopColor="#c09c00" /></radialGradient>
    </defs>
  </g>
);

export default function App() {
  return (
    <Page>
      <Global />
      <MenuBar>
        <span>Build</span><span>Tools</span><span>Statistics</span><span>Modules</span><span>Window</span><span>Help</span>
      </MenuBar>
      <ToolRow first items={row1} />
      <ToolRow items={row2} />
      <ToolRow last items={row3} width={588} />
      <Desk>
        <Stub />
        <MdiWindow $x={141} $y={16} $w={1442} $h={900} $tone="#d6e3f6">
          <TitleBar $h={63}><TitleText /><Caption /></TitleBar>
          <ViewportWrap><Viewport /></ViewportWrap>
        </MdiWindow>
        <MdiWindow $x={267} $y={264} $w={1527} $h={601} $tone="#dbe6f4">
          <TitleBar $h={62}><TitleText /><Caption /></TitleBar>
          <ViewportWrap>
            <Viewport>
              <Scene viewBox="285 538 1491 518">
                <LabelText x="1698" y="925" $ink="#10c010">Y</LabelText>
                <path d="M1700 987 L1703 955" stroke="#10e010" strokeWidth="3.5" />
                <path d="M1704 941 L1711 962 L1696 962Z" fill="#10f010" />
                <path d="M1700 988 H1728" stroke="#f010d0" strokeWidth="6" />
                <path d="M1741 989 L1721 980 L1721 997Z" fill="#f010d0" />
                <path d="M1710 976 L1720 990 M1720 976 L1710 990" stroke="#f0f0f0" strokeWidth="1.4" />
                <LabelText x="1751" y="995" $ink="#f010c8">Z</LabelText>
              </Scene>
            </Viewport>
          </ViewportWrap>
        </MdiWindow>
        <MdiWindow $active $x={7} $y={4} $w={1528} $h={601} $tone="#b8cfe8">
          <TitleBar $active $h={62}>
            <SLogo size={28} />
            <TitleText>Layer *</TitleText>
            <Caption active />
          </TitleBar>
          <ViewportWrap>
            <Viewport>
              <Scene viewBox="26 279 1490 517">
                <Molecule />
                <LabelText x="1488" y="727" $ink="#f010c8">Z</LabelText>
              </Scene>
            </Viewport>
          </ViewportWrap>
        </MdiWindow>
        <Dialog>
          <DlgTitle>
            <DlgIcon>
              <svg width="31" height="32" viewBox="0 0 31 32">
                <rect x=".5" y=".5" width="30" height="31" fill="#2a86d8" stroke="#1a4f80" />
                <rect x="3" y="4" width="24" height="5" fill="#bfe0fa" />
                <rect x="8" y="12" width="19" height="17" fill="#5ab0ee" />
                <rect x="13" y="16" width="10" height="13" fill="#0a2a50" />
                <rect x="3" y="22" width="8" height="7" fill="#0a1a30" />
              </svg>
            </DlgIcon>
            <DlgName>Build Layers</DlgName>
            <svg width="22" height="22" viewBox="0 0 22 22"><path d="M2 2 L20 20 M20 2 L2 20" stroke="#111" strokeWidth="2" /></svg>
          </DlgTitle>
          <DlgBody>
            <Tabs>
              <Tab $on $w={158}>Define Layers</Tab>
              <Tab $w={144}>Layer Details</Tab>
              <Tab $w={111}>Matching</Tab>
              <Tab $w={96}>Options</Tab>
            </Tabs>
            <Pane>
              <LayerGrid>
                <HeadCell $col={2} $pad={15}>Source documents</HeadCell>
                <HeadCell $col={4} $pad={15}>Set names</HeadCell>

                <RowLabel>Layer 1</RowLabel>
                <Combo><ComboValue><SLogo size={28} />C_mp-48_conventional</ComboValue><ComboBtn><SmallCaret /></ComboBtn></Combo>
                <Arrow>--&gt;</Arrow>
                <NameInput>Layer 1</NameInput>

                <RowLabel>Layer 2</RowLabel>
                <Combo><ComboValue><SLogo size={28} />MoS2_mp-1434_convent</ComboValue><ComboBtn><SmallCaret /></ComboBtn></Combo>
                <Arrow>--&gt;</Arrow>
                <NameInput>Layer 2</NameInput>

                <RowLabel>Layer 3</RowLabel>
                <Combo><ComboValue /><ComboBtn><SmallCaret /></ComboBtn></Combo>
                <Arrow>--&gt;</Arrow>
                <NameInput $off>Layer 3</NameInput>
              </LayerGrid>
              <Radios>
                <RadioRow><RadioMark $on /><RadioLabel $focus>Build layered structure as a crystal</RadioLabel></RadioRow>
                <RadioRow><RadioMark /><RadioLabel>Build layered structure as a surface</RadioLabel></RadioRow>
              </Radios>
            </Pane>
            <BtnRow>
              <PushBtn $w={126}>Build</PushBtn>
              <PushBtn $w={24}><SmallCaret /></PushBtn>
              <PushBtn $w={150} $ml={12}>Help</PushBtn>
            </BtnRow>
          </DlgBody>
        </Dialog>
      </Desk>
      <Status>
        <StatusCell $w={265} />
        <StatusCell $w={57} />
        <StatusCell $w={72}>NUM</StatusCell>
        <StatusCell $w={66} />
      </Status>
    </Page>
  );
}
